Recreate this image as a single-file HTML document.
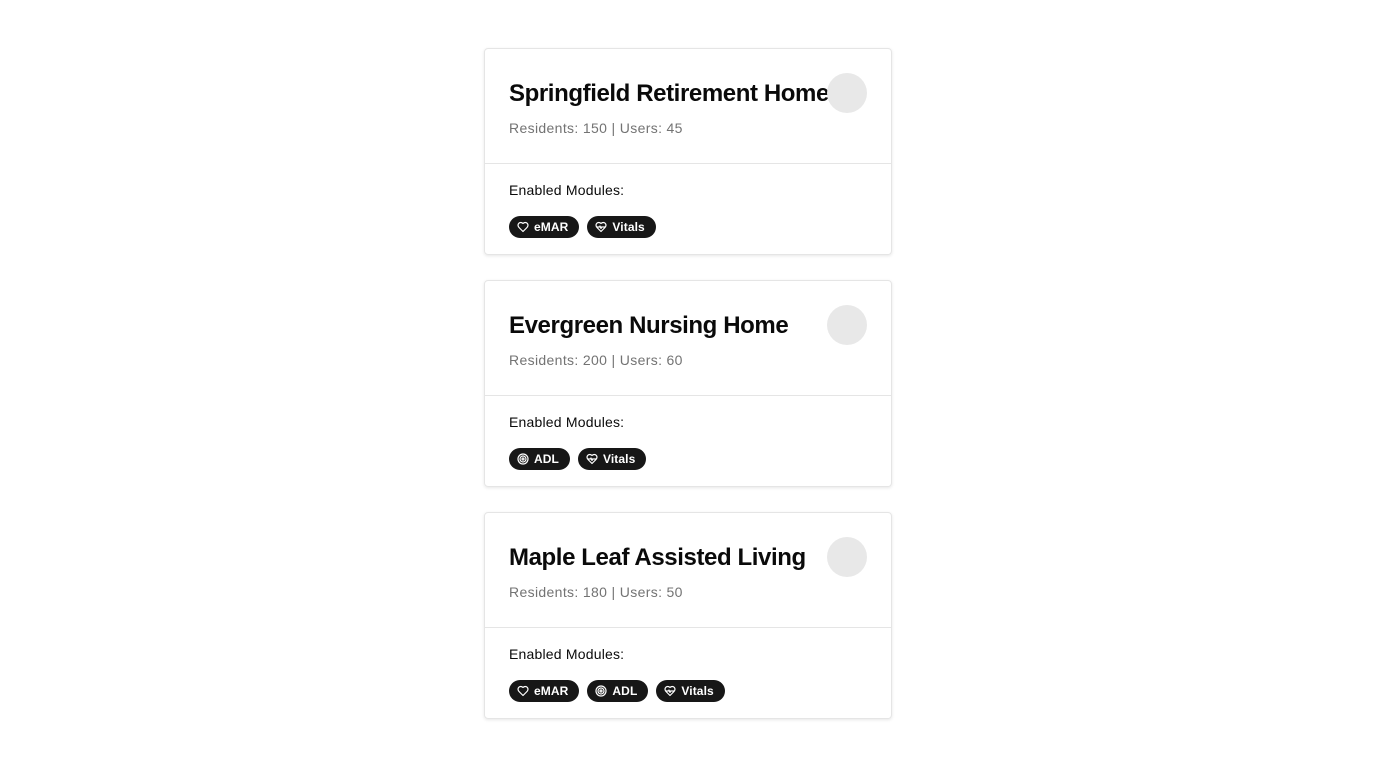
<!DOCTYPE html>
<html><head><meta charset="utf-8"><style>
*{box-sizing:border-box;margin:0;padding:0}
body{width:1376px;height:768px;background:#fff;font-family:"Liberation Sans",sans-serif;color:#0a0a0a}
.card{position:absolute;left:484px;width:408px;height:207px;border:1px solid #e5e5e5;border-radius:4px;box-shadow:0 1px 3px rgba(0,0,0,.1)}
.hd{height:115px;border-bottom:1px solid #e5e5e5;position:relative;padding:30px 24px 0}
h2{font-size:24px;font-weight:700;letter-spacing:-0.4px;line-height:30px;white-space:nowrap}
.sub{margin-top:11px;font-size:14px;color:#737373;letter-spacing:0.35px}
.circ{position:absolute;left:342px;top:24px;width:40px;height:40px;border-radius:50%;background:#e8e8e8}
.bd{padding:18px 24px 0}
.lbl{font-size:14px;letter-spacing:0.2px}
.badges{margin-top:18px;display:flex;gap:8px}
.b{height:22px;border-radius:11px;background:#171717;color:#fff;font-size:12px;font-weight:700;display:flex;align-items:center;padding:0 11px 0 8px;gap:5px;letter-spacing:0.1px}
.b svg{width:12px;height:12px}
</style></head><body>
<svg width="0" height="0" style="position:absolute"><defs>
<symbol id="h" viewBox="0 0 24 24"><path d="M19 14c1.5-1.5 3-3.2 3-5.5A5.5 5.5 0 0 0 16.5 3c-1.8 0-3 .5-4.5 2-1.5-1.5-2.7-2-4.5-2A5.5 5.5 0 0 0 2 8.5c0 2.3 1.5 4 3 5.5l7 7z" fill="none" stroke="#fff" stroke-width="2.4" stroke-linejoin="round"/></symbol>
<symbol id="v" viewBox="0 0 24 24"><path d="M19 14c1.5-1.5 3-3.2 3-5.5A5.5 5.5 0 0 0 16.5 3c-1.8 0-3 .5-4.5 2-1.5-1.5-2.7-2-4.5-2A5.5 5.5 0 0 0 2 8.5c0 2.3 1.5 4 3 5.5l7 7z M3.2 12H9l1-2 2 5 1-3h7.8" fill="none" stroke="#fff" stroke-width="2.4" stroke-linejoin="round"/></symbol>
<symbol id="a" viewBox="0 0 24 24"><g fill="none" stroke="#fff" stroke-width="2.4"><circle cx="12" cy="12" r="10"/><circle cx="12" cy="12" r="6"/><circle cx="12" cy="12" r="2"/></g></symbol>
</defs></svg>

<div class="card" style="top:48px"><div class="hd"><h2>Springfield Retirement Home</h2><div class="sub">Residents: 150 | Users: 45</div><div class="circ"></div></div>
<div class="bd"><div class="lbl">Enabled Modules:</div><div class="badges">
<div class="b"><svg><use href="#h"/></svg>eMAR</div><div class="b"><svg><use href="#v"/></svg>Vitals</div></div></div></div>

<div class="card" style="top:280px"><div class="hd"><h2>Evergreen Nursing Home</h2><div class="sub">Residents: 200 | Users: 60</div><div class="circ"></div></div>
<div class="bd"><div class="lbl">Enabled Modules:</div><div class="badges">
<div class="b"><svg><use href="#a"/></svg>ADL</div><div class="b"><svg><use href="#v"/></svg>Vitals</div></div></div></div>

<div class="card" style="top:512px"><div class="hd"><h2>Maple Leaf Assisted Living</h2><div class="sub">Residents: 180 | Users: 50</div><div class="circ"></div></div>
<div class="bd"><div class="lbl">Enabled Modules:</div><div class="badges">
<div class="b"><svg><use href="#h"/></svg>eMAR</div><div class="b"><svg><use href="#a"/></svg>ADL</div><div class="b"><svg><use href="#v"/></svg>Vitals</div></div></div></div>
</body></html>
